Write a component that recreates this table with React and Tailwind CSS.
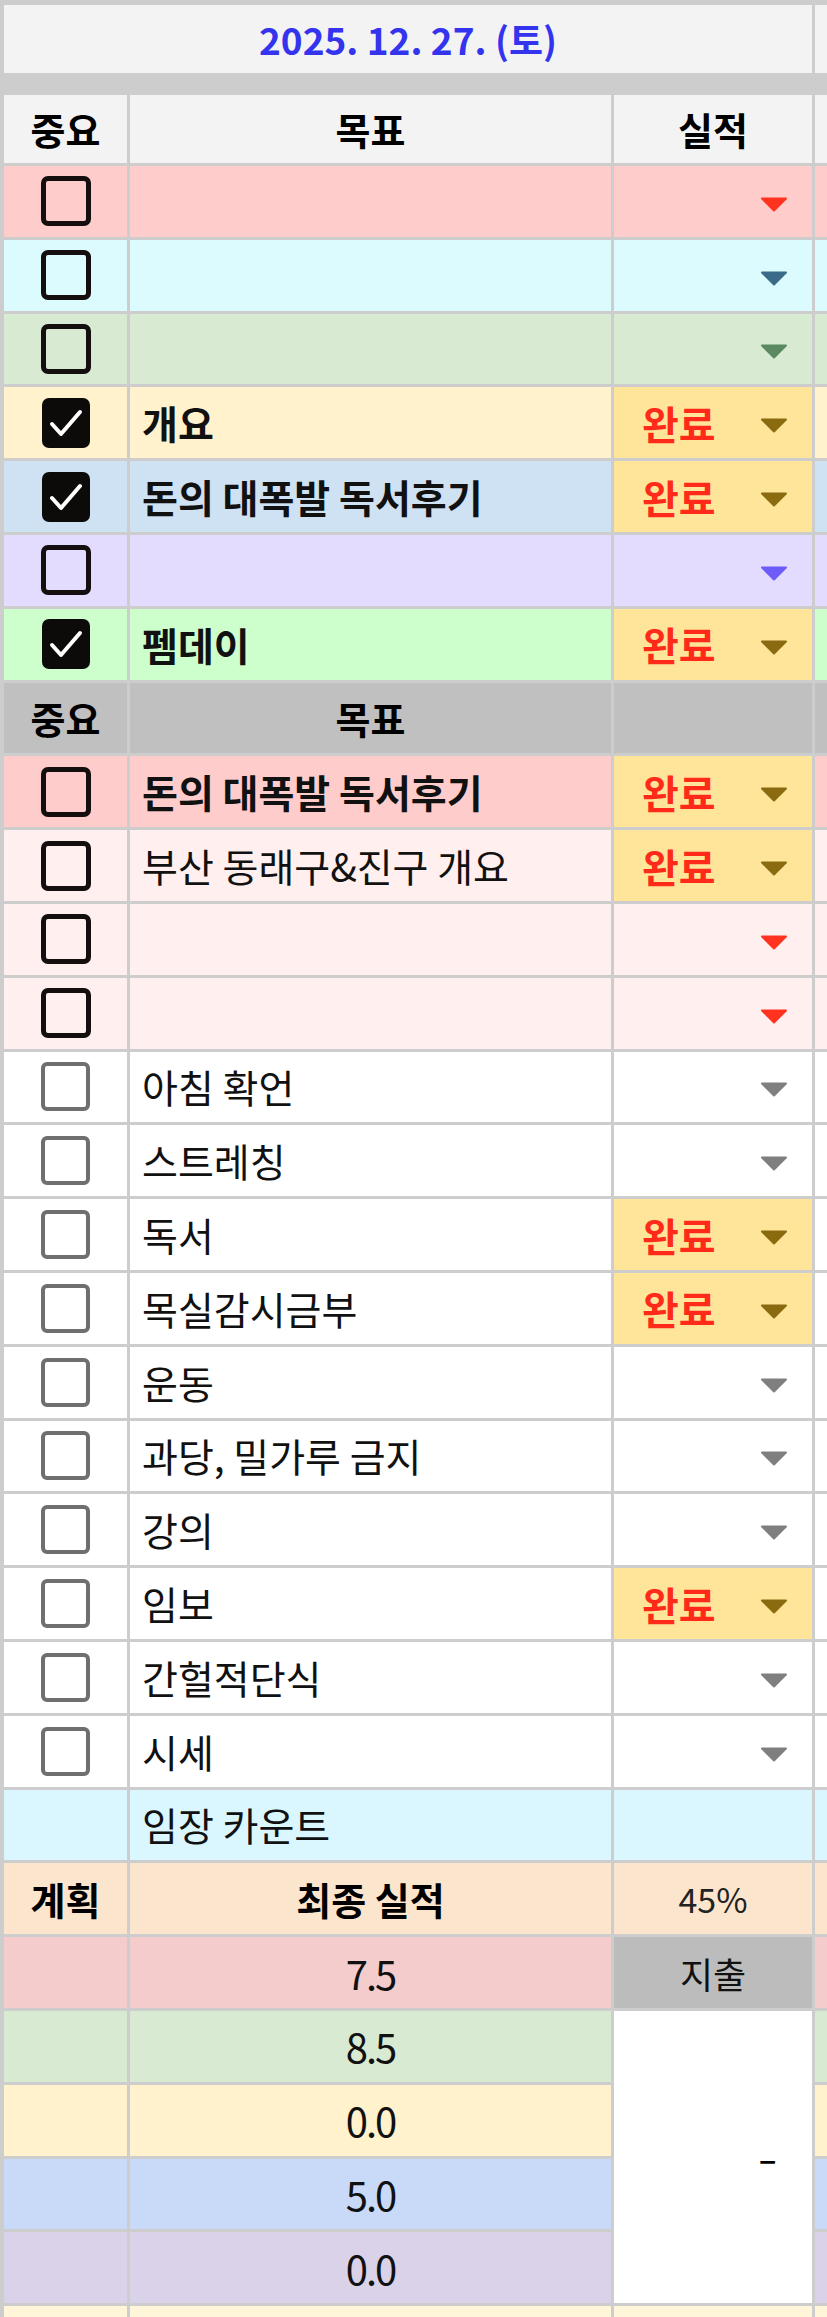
import React from 'react';

const COLS = 'grid grid-cols-[123px_481px_198px_1fr] gap-x-[3px]';

const rows = [
  { bg: 'bg-[#ffcccc]', box: 'dark', arrow: '#ff3320' },
  { bg: 'bg-[#dcfbff]', box: 'dark', arrow: '#3b6b88' },
  { bg: 'bg-[#d9ead3]', box: 'dark', arrow: '#5b8a60' },
  { bg: 'bg-[#fff2cc]', box: 'checked', text: '개요', bold: true, done: true },
  { bg: 'bg-[#cfe2f3]', box: 'checked', text: '돈의 대폭발 독서후기', bold: true, done: true },
  { bg: 'bg-[#e4dcff]', box: 'dark', arrow: '#6d5cf7' },
  { bg: 'bg-[#ccffcc]', box: 'checked', text: '펨데이', bold: true, done: true },
  { header: true },
  { bg: 'bg-[#ffcccc]', box: 'dark', text: '돈의 대폭발 독서후기', bold: true, done: true },
  { bg: 'bg-[#ffefef]', box: 'dark', text: '부산 동래구&진구 개요', done: true },
  { bg: 'bg-[#ffefef]', box: 'dark', arrow: '#ff3320' },
  { bg: 'bg-[#ffefef]', box: 'dark', arrow: '#ff3320' },
  { bg: 'bg-white', box: 'gray', text: '아침 확언', arrow: '#7f7f7f' },
  { bg: 'bg-white', box: 'gray', text: '스트레칭', arrow: '#7f7f7f' },
  { bg: 'bg-white', box: 'gray', text: '독서', done: true },
  { bg: 'bg-white', box: 'gray', text: '목실감시금부', done: true },
  { bg: 'bg-white', box: 'gray', text: '운동', arrow: '#7f7f7f' },
  { bg: 'bg-white', box: 'gray', text: '과당, 밀가루 금지', arrow: '#7f7f7f' },
  { bg: 'bg-white', box: 'gray', text: '강의', arrow: '#7f7f7f' },
  { bg: 'bg-white', box: 'gray', text: '임보', done: true },
  { bg: 'bg-white', box: 'gray', text: '간헐적단식', arrow: '#7f7f7f' },
  { bg: 'bg-white', box: 'gray', text: '시세', arrow: '#7f7f7f' },
  { bg: 'bg-[#daf7ff]', text: '임장 카운트' },
];

const scores = [
  { bg: 'bg-[#f4cccc]', value: '7.5' },
  { bg: 'bg-[#d9ead3]', value: '8.5' },
  { bg: 'bg-[#fff2cc]', value: '0.0' },
  { bg: 'bg-[#c9daf8]', value: '5.0' },
  { bg: 'bg-[#d9d2e9]', value: '0.0' },
];

function Box({ kind }) {
  if (kind === 'checked') {
    return (
      <svg width="50" height="52" viewBox="0 0 50 52">
        <rect x="1" y="1" width="48" height="50" rx="7" fill="#0d0a0a" />
        <path d="M11 27 L20 37 L39 15" fill="none" stroke="#fff" strokeWidth="4" strokeLinecap="round" strokeLinejoin="round" />
      </svg>
    );
  }
  if (kind === 'dark') {
    return <div className="w-[50px] h-[50px] rounded-[7px] border-[5px] border-[#140e0e]" />;
  }
  if (kind === 'gray') {
    return <div className="w-[49px] h-[49px] rounded-[6px] border-[4px] border-[#6f6f6f]" />;
  }
  return null;
}

function Arrow({ color }) {
  return (
    <svg width="28" height="15" viewBox="0 0 28 15" className="mt-[6px]">
      <path d="M2 1.5 H26 L14 13.5 Z" fill={color} stroke={color} strokeWidth="2" strokeLinejoin="round" />
    </svg>
  );
}

function Row({ row }) {
  if (row.header) {
    return (
      <>
        <div className="bg-[#c0c0c0] flex items-center justify-center text-[38px] font-bold">중요</div>
        <div className="bg-[#c0c0c0] flex items-center justify-center text-[38px] font-bold">목표</div>
        <div className="bg-[#c0c0c0]" />
        <div className="bg-[#c0c0c0]" />
      </>
    );
  }
  return (
    <>
      <div className={`${row.bg} flex items-center justify-center`}>
        <Box kind={row.box} />
      </div>
      <div className={`${row.bg} flex items-center pl-[12px] text-[39px] text-[#111] ${row.bold ? 'font-bold' : 'font-normal'}`}>
        {row.text}
      </div>
      {row.done ? (
        <div className="bg-[#ffe599] flex items-center justify-between pl-[28px] pr-[24px]">
          <span className="text-[40px] font-bold text-[#ff2a1a]">완료</span>
          <Arrow color="#8a6b10" />
        </div>
      ) : (
        <div className={`${row.bg} flex items-center justify-end pr-[24px]`}>
          {row.arrow && <Arrow color={row.arrow} />}
        </div>
      )}
      <div className={row.bg} />
    </>
  );
}

export default function App() {
  return (
    <div className="w-[827px] h-[2317px] overflow-hidden bg-[#cdcdcd] pl-[4px] pt-[5px] font-['Noto_Sans_CJK_KR','Noto_Sans',sans-serif] leading-none text-black">
      <div className={`${COLS} h-[68px]`}>
        <div className="col-span-3 bg-[#f3f3f3] flex items-center justify-center text-[37px] font-bold text-[#3434ee]">
          2025. 12. 27. (토)
        </div>
        <div className="bg-[#f3f3f3]" />
      </div>

      <div className={`${COLS} h-[68px] mt-[22px] mb-[3px]`}>
        <div className="bg-[#f3f3f3] flex items-center justify-center text-[38px] font-bold">중요</div>
        <div className="bg-[#f3f3f3] flex items-center justify-center text-[38px] font-bold">목표</div>
        <div className="bg-[#f3f3f3] flex items-center justify-center text-[38px] font-bold">실적</div>
        <div className="bg-[#f3f3f3]" />
      </div>

      <div className={`${COLS} auto-rows-[70.8px] gap-y-[3px]`}>
        {rows.map((row, i) => (
          <Row key={i} row={row} />
        ))}

        <div className="bg-[#fce5cd] flex items-center justify-center text-[38px] font-bold">계획</div>
        <div className="bg-[#fce5cd] flex items-center justify-center text-[38px] font-bold">최종 실적</div>
        <div className="bg-[#fce5cd] flex items-center justify-center text-[34px] text-[#222]">45%</div>
        <div className="bg-[#fce5cd]" />

        {scores.map((s, i) => (
          <React.Fragment key={i}>
            <div className={s.bg} />
            <div className={`${s.bg} flex items-center justify-center text-[40px] tracking-[-2px] text-[#111]`}>{s.value}</div>
            {i === 0 && (
              <div className="bg-[#bcbcbc] flex items-center justify-center text-[36px] text-[#111]">지출</div>
            )}
            {i === 1 && (
              <div className="row-span-4 bg-white flex items-center justify-end pr-[38px] text-[38px]">
                <span className="inline-block scale-x-150">-</span>
              </div>
            )}
            <div className={s.bg} />
          </React.Fragment>
        ))}

        <div className="bg-[#fff6da]" />
        <div className="bg-[#fff6da]" />
        <div className="bg-[#fff6da]" />
        <div className="bg-[#fff6da]" />
      </div>
    </div>
  );
}
